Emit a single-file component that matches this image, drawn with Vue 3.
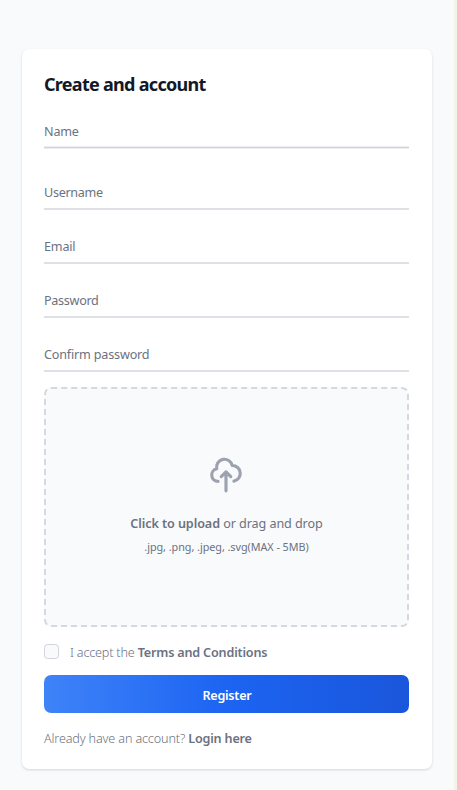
<script setup>
const fields = ['Name', 'Username', 'Email', 'Password', 'Confirm password']
</script>

<template>
  <main class="page">
    <section class="card">
      <h1>Create and account</h1>
      <form @submit.prevent>
        <label v-for="(label, i) in fields" :key="label" class="field" :class="{ first: i === 0 }">
          <span>{{ label }}</span>
        </label>
        <div class="drop">
          <svg viewBox="0 0 24 24" fill="none" stroke="currentColor" stroke-width="2" stroke-linecap="round" stroke-linejoin="round">
            <path d="M7 16a4 4 0 01-.88-7.903A5 5 0 1115.9 6L16 6a5 5 0 011 9.9M15 13l-3-3m0 0l-3 3m3-3v12" />
          </svg>
          <p class="hint"><b>Click to upload</b> <span>or drag and drop</span></p>
          <p class="types">.jpg, .png, .jpeg, .svg(MAX - 5MB)</p>
        </div>
        <div class="terms">
          <i class="check"></i>
          <p><span class="light">I accept the</span> <b>Terms and Conditions</b></p>
        </div>
        <button type="submit">Register</button>
        <p class="login"><span class="light">Already have an account?</span> <b>Login here</b></p>
      </form>
    </section>
  </main>
</template>

<style>
body {
  margin: 0;
  background: #f9fafb;
}
</style>

<style scoped>
.page {
  box-sizing: border-box;
  height: 790px;
  padding: 49px 22px 0 22px;
  background: #f9fafc;
  border-right: 3px solid #f1f5e9;
  font-family: "Noto Sans", "Open Sans", sans-serif;
  font-size: 12.6px;
  line-height: 18px;
  letter-spacing: -0.18px;
  color: #6b7280;
  overflow: hidden;
}
.card {
  box-sizing: border-box;
  height: 720px;
  padding: 22px 23px 0 22px;
  background: #fff;
  border-radius: 7.2px;
  box-shadow: 0 1px 3px rgba(0, 0, 0, 0.1), 0 1px 2px rgba(0, 0, 0, 0.06);
}
h1 {
  margin: 0 0 18px;
  font-size: 18px;
  line-height: 27px;
  font-weight: 700;
  letter-spacing: -0.71px;
  color: #111827;
}
form {
  display: flex;
  flex-direction: column;
}
p {
  margin: 0;
  white-space: nowrap;
}
b {
  font-weight: 600;
}
.field {
  box-sizing: border-box;
  height: 34px;
  padding-top: 8px;
  margin-bottom: 20px;
  border-bottom: 2px solid #dde1e6;
}
.field.first {
  height: 32px;
  padding-top: 7px;
  margin-bottom: 28px;
  border-bottom: 1px solid #d1d5db;
  box-shadow: 0 1px #eceef1, inset 0 -1px #eceef1;
}
.field:nth-of-type(2),
.field:nth-of-type(4) {
  letter-spacing: -0.3px;
}
.field:nth-of-type(5) {
  margin-bottom: 15px;
}
.drop {
  box-sizing: border-box;
  height: 240px;
  display: flex;
  flex-direction: column;
  align-items: center;
  padding-top: 67px;
  border: 2px dashed #d5d9df;
  border-radius: 7.2px;
  background: #f9fafc;
}
.drop svg {
  width: 38px;
  height: 38px;
  margin: 0 1px 21px 0;
  color: #9ca3af;
}
.hint {
  letter-spacing: -0.08px;
}
.types {
  margin-top: 6px;
  font-size: 10.8px;
  line-height: 15px;
  letter-spacing: -0.04px;
}
.terms {
  display: flex;
  height: 19px;
  padding-top: 17px;
}
.check {
  box-sizing: border-box;
  width: 15px;
  height: 15px;
  margin-right: 11px;
  border: 1px solid #d1d5db;
  border-radius: 3.6px;
  background: #f9fafb;
}
.light {
  font-weight: 300;
}
.login .light {
  letter-spacing: -0.14px;
}
button {
  height: 38px;
  margin: 12px 0 17px;
  padding: 3px 0 0 1px;
  border: 0;
  border-radius: 7.2px;
  background: linear-gradient(to right, #3f83f8, #1c64f2, #1a56db);
  color: #fff;
  font: 600 12.6px/18px "Noto Sans", "Open Sans", sans-serif;
  letter-spacing: -0.25px;
}
</style>
